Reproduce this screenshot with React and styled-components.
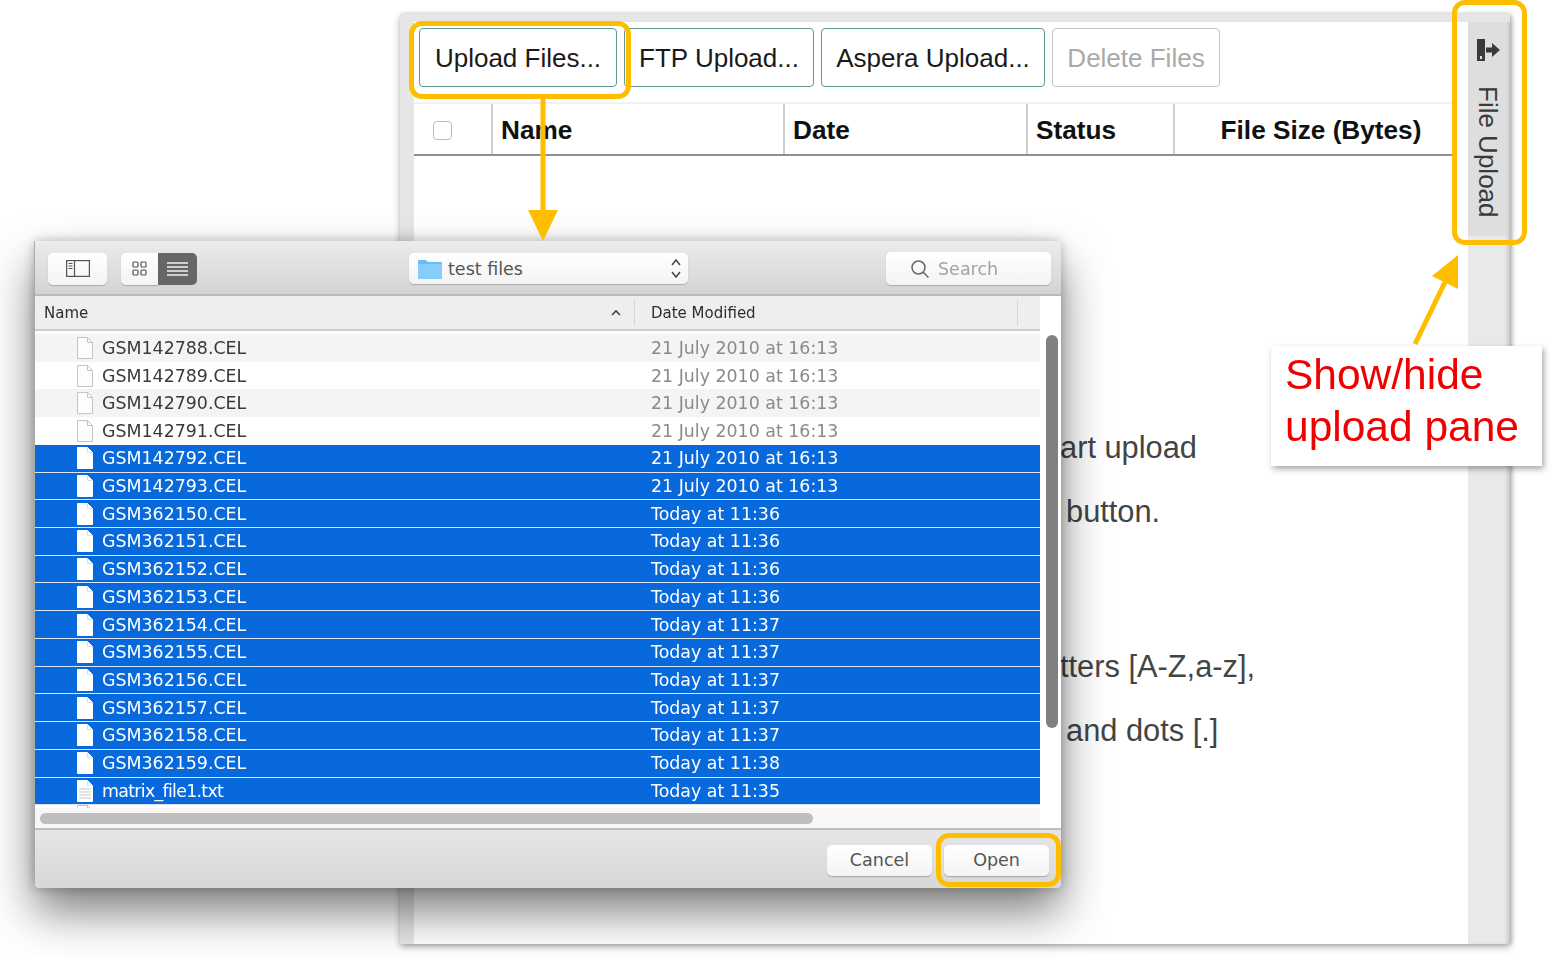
import styled, { createGlobalStyle } from "styled-components";

const ORANGE = "#ffbd00";

const GlobalStyle = createGlobalStyle`
  html, body {
    margin: 0;
    background: #fff;
    overflow: hidden;
  }
  * {
    box-sizing: border-box;
  }
`;

const Page = styled.div`
  position: relative;
  width: 1558px;
  height: 958px;
  padding: 14px 48px 14px 400px;
  font-family: "Liberation Sans", Arial, sans-serif;
  overflow: hidden;
  filter: blur(0.35px);
`;

/* background page: upload pane */
const Pane = styled.div`
  display: flex;
  height: 100%;
  background: #e6e6e6;
  padding: 8px 0 0 14px;
  box-shadow: 0 3px 7px rgba(0, 0, 0, 0.3), 2px 0 4px rgba(0, 0, 0, 0.2);
`;

const PaneBody = styled.div`
  flex: 1;
  background: #fff;
  padding: 6px 0 0 5px;
  min-width: 0;
`;

const ButtonBar = styled.div`
  display: flex;
  gap: 7px;
  height: 59px;
`;

const PaneButton = styled.div`
  display: flex;
  align-items: center;
  justify-content: center;
  width: ${(p) => p.$w}px;
  padding-top: 2px;
  border: 1.5px solid ${(p) => (p.$disabled ? "#c4c4c4" : "#609a8e")};
  border-radius: 4px;
  font-size: 26px;
  color: ${(p) => (p.$disabled ? "#a9a9a9" : "#1a1a1a")};
`;

const TableHead = styled.div`
  display: grid;
  grid-template-columns: 79px 292px 243px 147px 279px;
  width: 1041px;
  height: 54px;
  margin: 15px 0 0 -5px;
  border-top: 2px solid #f0f0f0;
  border-bottom: 2px solid #8f8f8f;
  border-right: 2px solid #d0d0d0;
`;

const HeadCell = styled.div`
  display: flex;
  align-items: center;
  justify-content: ${(p) => (p.$center ? "center" : "flex-start")};
  padding: ${(p) => (p.$center ? "3px 0 0 13px" : "3px 0 0 8px")};
  border-right: ${(p) => (p.$last ? "none" : "2px solid #cfcfcf")};
  font-size: 26.2px;
  font-weight: 700;
  color: #111;
`;

const CheckBox = styled.span`
  width: 19px;
  height: 19px;
  margin: 0 0 0 11px;
  background: #fff;
  border: 1.5px solid #bdbdbd;
  border-radius: 4px;
`;

const Hints = styled.div`
  margin: 260px 0 0 641px;
  font-size: 30.8px;
  line-height: 64px;
  color: #444;
`;

const HintLine = styled.div`
  margin-left: ${(p) => p.$indent || 0}px;
  margin-top: ${(p) => p.$gap || 0}px;
  white-space: nowrap;
`;

const SideBar = styled.div`
  width: 42px;
  flex: none;
  background: #e9e9e9;
  box-shadow: inset -4px 0 4px -2px rgba(0, 0, 0, 0.18);
`;

const SideTab = styled.div`
  display: flex;
  flex-direction: column;
  align-items: center;
  height: 214px;
  padding-top: 16px;
  margin-right: 3px;
  background: #dedede;
  color: #3a3a3a;
`;

const SideLabel = styled.span`
  margin-top: 24px;
  writing-mode: vertical-rl;
  font-size: 26px;
  line-height: 30px;
`;

/* file dialog lying over the pane */
const Dialog = styled.div`
  position: absolute;
  left: 34px;
  top: 241px;
  width: 1027px;
  height: 647px;
  display: flex;
  flex-direction: column;
  background: #fff;
  border-left: 1px solid #aaa;
  border-radius: 0 0 5px 5px;
  overflow: hidden;
  font-family: "DejaVu Sans", sans-serif;
`;

const DialogShadow = styled.div`
  position: absolute;
  left: 34px;
  top: 241px;
  width: 1027px;
  height: 647px;
  border-radius: 5px;
  box-shadow: 0 24px 46px rgba(0, 0, 0, 0.5), 0 0 12px rgba(0, 0, 0, 0.25);
`;

const Toolbar = styled.div`
  display: flex;
  align-items: center;
  flex: none;
  height: 55px;
  padding: 2px 10px 0 13px;
  background: linear-gradient(#ececec, #d3d3d3);
  border-bottom: 2px solid #b9b9b9;
`;

const ToolButton = styled.div`
  display: flex;
  align-items: center;
  justify-content: center;
  width: ${(p) => p.$w}px;
  height: 32px;
  background: ${(p) => (p.$active ? "#666" : "linear-gradient(#fff, #f3f3f3)")};
  border-radius: ${(p) => p.$radius || "5px"};
  box-shadow: ${(p) => (p.$active ? "none" : "0 1px 1px rgba(0, 0, 0, 0.22)")};
`;

const Segmented = styled.div`
  display: flex;
  margin-left: 14px;
`;

const PathPopup = styled.div`
  display: flex;
  align-items: center;
  width: 279px;
  height: 31px;
  margin-left: 212px;
  padding: 0 6px 0 9px;
  background: linear-gradient(#fff, #f3f3f3);
  border-radius: 5px;
  box-shadow: 0 1px 1px rgba(0, 0, 0, 0.22);
  font-size: 17.5px;
  color: #555;
`;

const PathName = styled.span`
  flex: 1;
  margin-left: 6px;
`;

const SearchBox = styled.div`
  display: flex;
  align-items: center;
  gap: 8px;
  width: 165px;
  height: 33px;
  margin-left: auto;
  padding-left: 24px;
  background: linear-gradient(#fff, #f3f3f3);
  border-radius: 5px;
  box-shadow: 0 1px 1px rgba(0, 0, 0, 0.22);
  font-size: 17.5px;
  color: #a3a3a3;
`;

const ListArea = styled.div`
  display: grid;
  grid-template-columns: 1005px 1fr;
  flex: 1;
  min-height: 0;
`;

const ListMain = styled.div`
  display: flex;
  flex-direction: column;
  min-width: 0;
`;

const ColumnHead = styled.div`
  display: flex;
  align-items: center;
  flex: none;
  height: 35px;
  background: #eeeeee;
  border-bottom: 2px solid #cdcdcd;
  font-size: 15px;
  color: #2e2e2e;
`;

const NameHead = styled.div`
  display: flex;
  align-items: center;
  justify-content: space-between;
  width: 600px;
  height: 26px;
  padding: 0 13px 0 9px;
  border-right: 1px solid #d6d6d6;
`;

const DateHead = styled.div`
  width: 383px;
  height: 26px;
  line-height: 26px;
  padding-left: 16px;
  border-right: 1px solid #d6d6d6;
`;

const Rows = styled.div`
  margin-top: 3px;
`;

const Row = styled.div`
  display: flex;
  align-items: center;
  height: 27.72px;
  padding-left: 42px;
  font-size: 17.4px;
  background: ${(p) => (p.$selected ? "#0769dc" : p.$odd ? "#f4f4f4" : "#fff")};
  border-bottom: ${(p) => (p.$selected ? "1.5px solid #d8e6f8" : "none")};
  color: ${(p) => (p.$selected ? "#fff" : "#3a3a3a")};
`;

const FileName = styled.span`
  width: 549px;
  margin-left: 9px;
  letter-spacing: ${(p) => (p.$narrow ? "-0.7px" : "0")};
`;

const FileDate = styled.span`
  color: ${(p) => (p.$selected ? "#fff" : "#8a8a8a")};
`;

const ClippedRow = styled.div`
  height: 3px;
  padding-left: 42px;
  overflow: hidden;
  background: #fff;
`;

const HScroll = styled.div`
  height: 22px;
  padding: 5px 0 0 5px;
  background: #f7f7f7;
  border-bottom: 2px solid #bdbdbd;
`;

const HThumb = styled.div`
  width: 773px;
  height: 11px;
  background: #bebebe;
  border-radius: 6px;
`;

const VScroll = styled.div`
  padding: 39px 3px 0 6px;
  background: #fff;
  border-bottom: 2px solid #bdbdbd;
`;

const VThumb = styled.div`
  height: 393px;
  background: #808080;
  border-radius: 6px;
`;

const DialogFooter = styled.div`
  display: flex;
  align-items: center;
  justify-content: flex-end;
  gap: 12px;
  flex: none;
  height: 58px;
  padding: 2px 12px 0 0;
  background: linear-gradient(#e6e6e6, #d8d8d8);
`;

const FooterButton = styled.div`
  display: flex;
  align-items: center;
  justify-content: center;
  width: 105px;
  height: 31px;
  background: linear-gradient(#fff, #f4f4f4);
  border-radius: 5px;
  box-shadow: 0 1px 1px rgba(0, 0, 0, 0.25);
  font-size: 17.5px;
  color: #555;
`;

/* annotations */
const Highlight = styled.div`
  position: absolute;
  left: ${(p) => p.$x}px;
  top: ${(p) => p.$y}px;
  width: ${(p) => p.$w}px;
  height: ${(p) => p.$h}px;
  border: 5px solid ${ORANGE};
  border-radius: 13px;
`;

const Callout = styled.div`
  position: absolute;
  left: 1271px;
  top: 346px;
  width: 271px;
  height: 120px;
  padding: 3px 0 0 14px;
  background: #fff;
  box-shadow: 2px 3px 6px rgba(0, 0, 0, 0.35);
  font-size: 42.5px;
  line-height: 52px;
  color: #f00000;
`;

const Arrows = styled.svg`
  position: absolute;
  left: 0;
  top: 0;
`;

const ExitIcon = () => (
  <svg width="26" height="24" viewBox="0 0 26 24">
    <path d="M2 1h8v22H2z" fill="#3a3a3a" />
    <path d="M5 18h2v3H5z" fill="#dedede" />
    <path d="M11 9.5h6V5l8 7-8 7v-4.5h-6z" fill="#3a3a3a" />
  </svg>
);

const SidebarIcon = () => (
  <svg width="24" height="17" viewBox="0 0 24 17" fill="none" stroke="#555" strokeWidth="1.2">
    <rect x="0.6" y="0.6" width="22.8" height="15.8" />
    <path d="M8.5 .6v15.8" />
    <path d="M2.5 3.5h4M2.5 6h4M2.5 8.5h4" />
  </svg>
);

const GridIcon = () => (
  <svg width="15" height="15" viewBox="0 0 15 15" fill="none" stroke="#555" strokeWidth="1.2">
    <rect x="1" y="1" width="5" height="5" rx="1" />
    <rect x="9" y="1" width="5" height="5" rx="1" />
    <rect x="1" y="9" width="5" height="5" rx="1" />
    <rect x="9" y="9" width="5" height="5" rx="1" />
  </svg>
);

const ListIcon = () => (
  <svg width="21" height="14" viewBox="0 0 21 14" stroke="#f2f2f2" strokeWidth="1.3">
    <path d="M0 1h21M0 5h21M0 9h21M0 13h21" />
  </svg>
);

const FolderIcon = () => (
  <svg width="24" height="20" viewBox="0 0 24 20">
    <path d="M0 2a1 1 0 0 1 1-1h7l2 2h13a1 1 0 0 1 1 1v15a1 1 0 0 1-1 1H1a1 1 0 0 1-1-1z" fill="#6cbcf5" />
    <path d="M0 5h24v14a1 1 0 0 1-1 1H1a1 1 0 0 1-1-1z" fill="#86cdfb" />
  </svg>
);

const UpDown = () => (
  <svg width="12" height="21" viewBox="0 0 12 21" fill="none" stroke="#444" strokeWidth="1.5">
    <path d="M2 7l4-5 4 5M2 14l4 5 4-5" />
  </svg>
);

const SearchIcon = () => (
  <svg width="20" height="20" viewBox="0 0 20 20" fill="none" stroke="#666" strokeWidth="1.5">
    <circle cx="8.5" cy="8.5" r="6.5" />
    <path d="M13 13l5.5 5.5" />
  </svg>
);

const Caret = () => (
  <svg width="10" height="7" viewBox="0 0 10 7" fill="none" stroke="#444" strokeWidth="1.6">
    <path d="M1 6l4-4 4 4" />
  </svg>
);

const FileIcon = ({ selected, lines }) => (
  <svg width="16" height="22" viewBox="0 0 16 22">
    <path
      d="M.5.5h10l5 5v16H.5z"
      fill={selected ? "#fff" : "#fdfdfd"}
      stroke={selected ? "#fff" : "#c4c4c4"}
    />
    <path d="M10.5.5v5h5" fill="none" stroke={selected ? "#cfe0f6" : "#c4c4c4"} />
    {lines && <path d="M2 9h12M2 12h12M2 15h12M2 18h12" stroke="#dcdcdc" strokeWidth="1.5" />}
  </svg>
);

const files = [
  ["GSM142788.CEL", "21 July 2010 at 16:13"],
  ["GSM142789.CEL", "21 July 2010 at 16:13"],
  ["GSM142790.CEL", "21 July 2010 at 16:13"],
  ["GSM142791.CEL", "21 July 2010 at 16:13"],
  ["GSM142792.CEL", "21 July 2010 at 16:13", true],
  ["GSM142793.CEL", "21 July 2010 at 16:13", true],
  ["GSM362150.CEL", "Today at 11:36", true],
  ["GSM362151.CEL", "Today at 11:36", true],
  ["GSM362152.CEL", "Today at 11:36", true],
  ["GSM362153.CEL", "Today at 11:36", true],
  ["GSM362154.CEL", "Today at 11:37", true],
  ["GSM362155.CEL", "Today at 11:37", true],
  ["GSM362156.CEL", "Today at 11:37", true],
  ["GSM362157.CEL", "Today at 11:37", true],
  ["GSM362158.CEL", "Today at 11:37", true],
  ["GSM362159.CEL", "Today at 11:38", true],
  ["matrix_file1.txt", "Today at 11:35", true],
];

const App = () => {
  return (
    <Page>
      <GlobalStyle />
      <Pane>
        <PaneBody>
          <ButtonBar>
            <PaneButton $w={198}>Upload Files...</PaneButton>
            <PaneButton $w={190}>FTP Upload...</PaneButton>
            <PaneButton $w={224}>Aspera Upload...</PaneButton>
            <PaneButton $w={168} $disabled>Delete Files</PaneButton>
          </ButtonBar>
          <TableHead>
            <HeadCell>
              <CheckBox />
            </HeadCell>
            <HeadCell>Name</HeadCell>
            <HeadCell>Date</HeadCell>
            <HeadCell>Status</HeadCell>
            <HeadCell $center $last>File Size (Bytes)</HeadCell>
          </TableHead>
          <Hints>
            <HintLine>art upload</HintLine>
            <HintLine $indent={6}>button.</HintLine>
            <HintLine $gap={91}>tters [A-Z,a-z],</HintLine>
            <HintLine $indent={6}>and dots [.]</HintLine>
          </Hints>
        </PaneBody>
        <SideBar>
          <SideTab>
            <ExitIcon />
            <SideLabel>File Upload</SideLabel>
          </SideTab>
        </SideBar>
      </Pane>

      <DialogShadow />
      <Dialog>
        <Toolbar>
          <ToolButton $w={59}>
            <SidebarIcon />
          </ToolButton>
          <Segmented>
            <ToolButton $w={37} $radius="5px 0 0 5px">
              <GridIcon />
            </ToolButton>
            <ToolButton $w={39} $radius="0 5px 5px 0" $active>
              <ListIcon />
            </ToolButton>
          </Segmented>
          <PathPopup>
            <FolderIcon />
            <PathName>test files</PathName>
            <UpDown />
          </PathPopup>
          <SearchBox>
            <SearchIcon />
            Search
          </SearchBox>
        </Toolbar>
        <ListArea>
          <ListMain>
            <ColumnHead>
              <NameHead>
                Name
                <Caret />
              </NameHead>
              <DateHead>Date Modified</DateHead>
            </ColumnHead>
            <Rows>
              {files.map(([name, date, selected], i) => (
                <Row key={name} $selected={selected} $odd={i % 2 === 0}>
                  <FileIcon selected={selected} lines={name.endsWith(".txt")} />
                  <FileName $narrow={name.endsWith(".txt")}>{name}</FileName>
                  <FileDate $selected={selected}>{date}</FileDate>
                </Row>
              ))}
            </Rows>
            <ClippedRow>
              <FileIcon />
            </ClippedRow>
            <HScroll>
              <HThumb />
            </HScroll>
          </ListMain>
          <VScroll>
            <VThumb />
          </VScroll>
        </ListArea>
        <DialogFooter>
          <FooterButton>Cancel</FooterButton>
          <FooterButton>Open</FooterButton>
        </DialogFooter>
      </Dialog>

      <Highlight $x={409} $y={21} $w={222} $h={78} />
      <Highlight $x={1452} $y={0} $w={75} $h={245} />
      <Highlight $x={936} $y={833} $w={125} $h={54} />

      <Arrows width="1558" height="958" viewBox="0 0 1558 958">
        <path d="M543 97v115" stroke={ORANGE} strokeWidth="5" fill="none" />
        <path d="M528 210h30l-15 31z" fill={ORANGE} />
        <path d="M1415 344l31-64" stroke={ORANGE} strokeWidth="5" fill="none" />
        <path d="M1458 255l-26 21 26 13z" fill={ORANGE} />
      </Arrows>

      <Callout>
        Show/hide
        <br />
        upload pane
      </Callout>
    </Page>
  );
};

export default App;
